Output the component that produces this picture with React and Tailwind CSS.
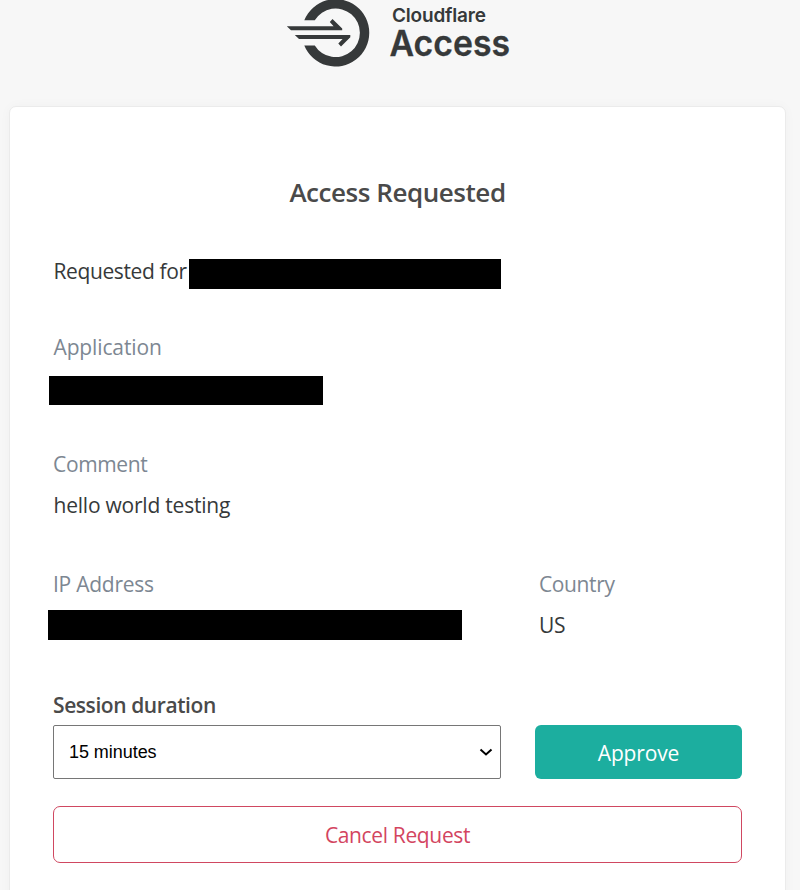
function Logo() {
  return (
    <svg width="240" height="75" viewBox="280 0 240 75" className="block" fill="#36393a">
      <path d="M304.3 20.2A33.7 33.7 0 1 1 304.3 45.4H314.8A24.3 24.3 0 1 0 314.8 20.2Z" />
      <path d="M286.8 26.3H333.6L329.8 22.1L332.5 19L342.2 28.4V30.3H291Z" />
      <path d="M294.8 35H350.3V37.2L341 46.4L338.3 43.5L342.6 39H299Z" />
      <text x="392" y="22" fontSize="19" fontWeight="600" textLength="94" fontFamily="Inter, sans-serif">Cloudflare</text>
      <text x="389.500" y="56" fontSize="36" fontWeight="600" textLength="120.500" lengthAdjust="spacingAndGlyphs" stroke="#36393a" strokeWidth="0.300" fontFamily="Inter, sans-serif">Access</text>
    </svg>
  );
}

function Redacted({ className }) {
  return <div className={`bg-black shrink-0 ${className}`} />;
}

export default function App() {
  return (
    <div className="flex h-[890px] w-[800px] flex-col overflow-hidden bg-[#f7f7f7] font-['Open_Sans','Noto_Sans',sans-serif] text-[21px] leading-[30px] tracking-[-0.22px] text-[#36393a]">
      <header className="flex h-[106px] shrink-0 pl-[280px] tracking-normal">
        <Logo />
      </header>
      <main className="ml-[9px] h-[800px] w-[777px] shrink-0 rounded-[7px] border border-[#ebebeb] bg-white pr-[43px] pl-[43px] shadow-[0_0_12px_rgba(0,0,0,0.03)]">
        <h1 className="mt-[67px] h-[36px] text-center text-[26px] leading-[36px] font-semibold tracking-[-0.45px] text-[#4a4a4a]">Access Requested</h1>
        <div className="mt-[49px] flex h-[30px]">
          <span className="-mt-[3px] w-[136px] shrink-0 pl-[0.5px] tracking-[-0.38px] whitespace-nowrap">Requested for</span>
          <Redacted className="h-[30px] w-[312px]" />
        </div>
        <div className="mt-[43px] pl-[0.5px] tracking-[-0.13px] text-[#7d8792]">Application</div>
        <Redacted className="mt-[14px] -ml-[4px] h-[29px] w-[274px]" />
        <div className="mt-[44px] tracking-[-0.35px] text-[#7d8792]">Comment</div>
        <div className="mt-[11px] pl-[0.5px]">hello world testing</div>
        <div className="mt-[49px] flex">
          <div className="w-[486px]">
            <div className="tracking-[-0.25px] text-[#7d8792]">IP Address</div>
            <Redacted className="mt-[11px] -ml-[5px] h-[30px] w-[414px]" />
          </div>
          <div>
            <div className="tracking-[-0.38px] text-[#7d8792]">Country</div>
            <div className="mt-[11px]">US</div>
          </div>
        </div>
        <div className="mt-[50px] font-semibold tracking-[-0.42px] text-[#4a4a4a]">Session duration</div>
        <div className="mt-[5px] flex justify-between">
          <button className="flex h-[54px] w-[448px] items-center justify-between rounded-[2px] border border-[#767676] pr-[7px] pl-[15px] font-['Liberation_Sans',sans-serif] text-[18px] tracking-[-0.05px] text-black">
            <span>15 minutes</span>
            <svg width="14" height="10" viewBox="0 0 14 10" fill="none" stroke="black" strokeWidth="2"><path d="M1.500 2.500L7 7.500L12.500 2.500" /></svg>
          </button>
          <button className="h-[54px] w-[207px] rounded-[6px] bg-[#1cae9f] pt-[2px] tracking-[-0.15px] text-white">Approve</button>
        </div>
        <button className="mt-[27px] block h-[57px] w-[689px] rounded-[7px] border border-[#d04861] tracking-[-0.35px] text-[#d3455f]">Cancel Request</button>
      </main>
    </div>
  );
}
